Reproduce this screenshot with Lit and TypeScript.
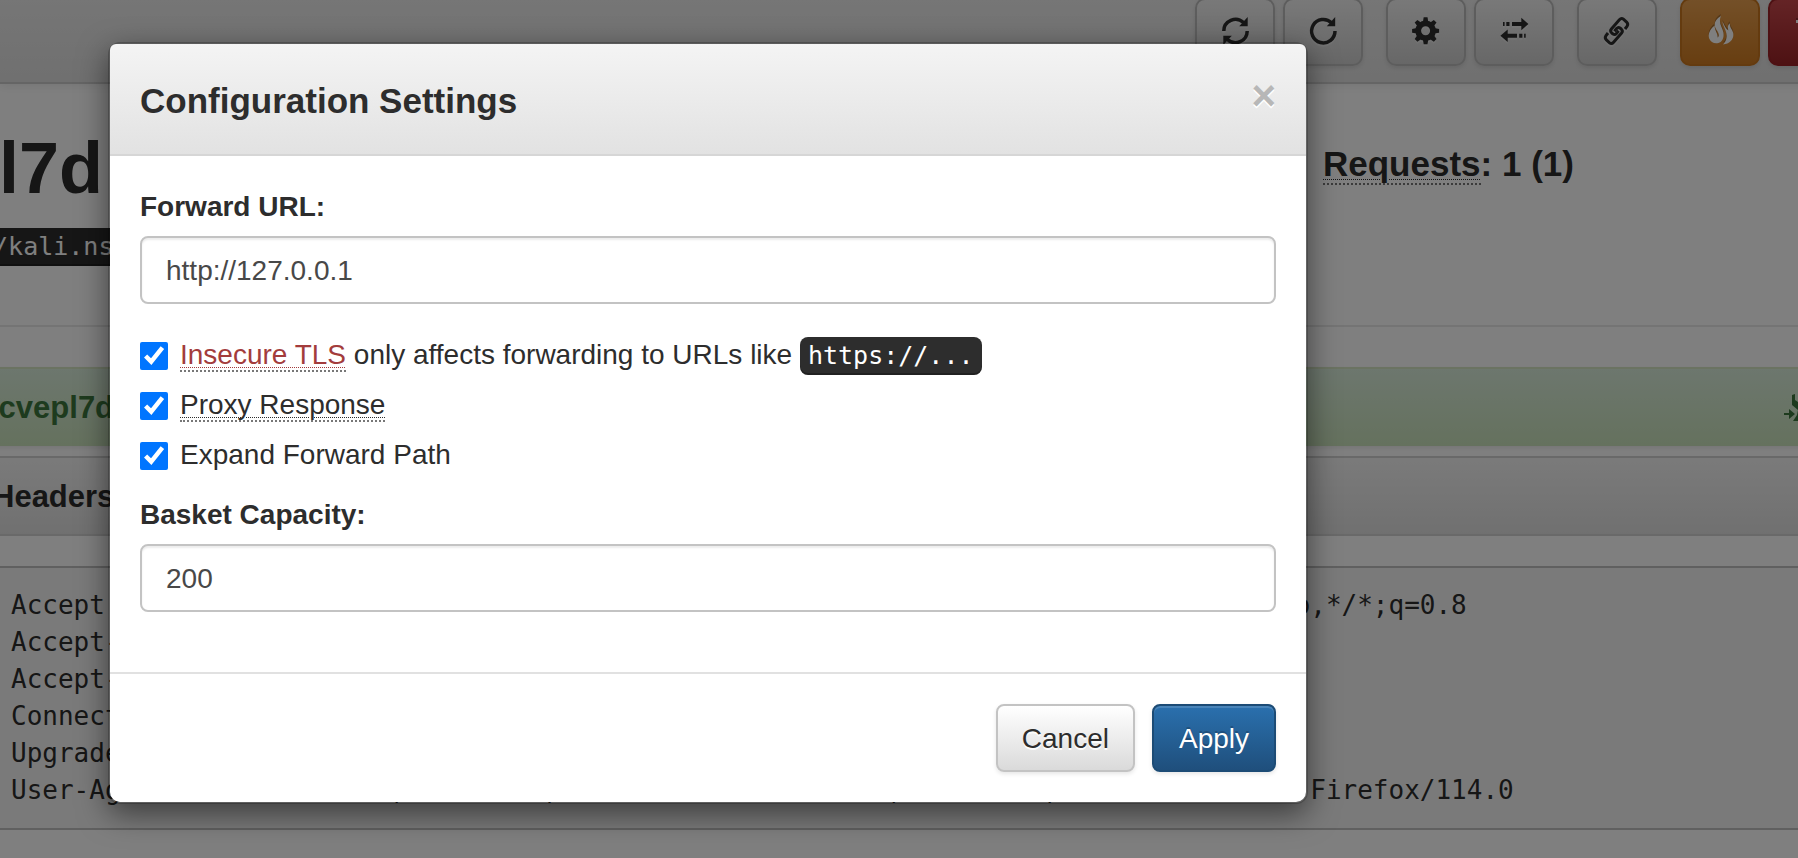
import { LitElement, html, css, svg, nothing } from "lit";
import { customElement, property } from "lit/decorators.js";

const ring = (d: string, width = 3.5) =>
  svg`<path d=${d} fill="none" stroke="currentColor" stroke-width=${width} />`;
const solid = (d: string) => svg`<path d=${d} fill="currentColor" />`;

const icons: Record<string, unknown> = {
  refresh: svg`
    ${ring("M2.8 14A11.7 11.7 0 0 1 22.5 5.5")}
    ${ring("M26.2 14A11.7 11.7 0 0 1 6.5 22.5")}
    ${solid("M26.7 0V9.2H18.2Z M2.3 28V18.8H10.8Z")}`,
  repeat: svg`
    ${ring("M22.5 5.8A11.7 11.7 0 1 0 26 14")}
    ${solid("M26.2 0V9.2H17.8Z")}`,
  cog: svg`
    <circle cx="13.6" cy="13.8" r="7.4" fill="none" stroke="currentColor" stroke-width="5.8" />
    ${[0, 45, 90, 135, 180, 225, 270, 315].map(
      (a) => svg`<path d="M10.9 5L11.7 0.3H15.5L16.3 5Z" fill="currentColor" transform="rotate(${a} 13.6 13.8)" />`
    )}`,
  transfer: solid(
    "M3 5h1.6v4H3z M6.3 5h3.2v4H6.3z M12 5h9.3V0.7L28.4 7 21.3 13.3V9H12z " +
      "M25.7 16.7h-1.6v4h1.6z M22.4 16.7h-3.2v4h3.2z M17 16.7H7.7V12.4L0.4 18.7 7.7 25V20.7H17z"
  ),
  link: svg`
    ${ring("M22 12L24 9.4Q25.6 7 23.6 5L20.4 2.2Q18.4 0.6 16.4 2.8L8.4 12Q6.8 14 8.6 15.8L10 17Q11.8 18.2 13.4 16.4L15.6 13.8", 3)}
    ${ring("M5 16L3 18.6Q1.4 21 3.4 23L6.6 25.8Q8.6 27.4 10.6 25.2L18.6 16Q20.2 14 18.4 12.2L17 11Q15.2 9.8 13.6 11.6L11.4 14.2", 3)}`,
  fire: svg`
    ${solid("M14.9-1C7.4 3.4 7.6 9 11 13.4C13.4 16.6 13.2 19.4 11.6 20.6C12 16.4 8.8 14.6 8.6 8.6C4 12.4 1.6 17 3.2 21.4C4.6 25.2 8.4 27 12.4 26C16.6 24.8 18.2 20 17.4 15.4C16.4 10.4 12 6.4 14.9-1Z")}
    ${solid("M16.6 4.4C16.6 9.4 21.4 14 20.6 20C20.2 23 19.4 25.4 17 27.4C24 26.8 28.2 22 27.2 16C26.6 12.4 23.6 11 23.8 6.2C21.4 8.4 21.6 11.2 22.4 13.6C19.8 11.4 18 8.4 16.6 4.4Z")}`,
  trash: solid("M2 3H9V0H18V3H25V6H2Z M4 8H23V27H4Z"),
  wrench: svg`
    ${solid("M0 19h5v-4L11 20 5 25v-4H0z")}
    ${solid("M8 1L11 0V6L14 8L17 6V0L20 2V9L16 13V27H9L13 21L14 16L8 11Z")}`,
};

@customElement("glyph-icon")
export class GlyphIcon extends LitElement {
  @property() name = "";

  static styles = css`
    :host { display: block; }
    .glyph { display: block; width: 28px; height: 28px; overflow: visible; }
  `;

  render() {
    return html`<svg class="glyph" viewBox="0 0 28 28" aria-hidden="true">${icons[this.name] ?? nothing}</svg>`;
  }
}

const toolbar = [
  [
    { icon: "refresh", label: "Auto refresh", kind: "plain" },
    { icon: "repeat", label: "Refresh", kind: "plain" },
  ],
  [
    { icon: "cog", label: "Settings", kind: "plain" },
    { icon: "transfer", label: "Responses", kind: "plain" },
  ],
  [{ icon: "link", label: "Share", kind: "plain" }],
  [
    { icon: "fire", label: "Delete requests", kind: "warning" },
    { icon: "trash", label: "Destroy basket", kind: "danger" },
  ],
];

const requestHeaders = [
  "Accept: text/html,application/xhtml+xml,application/xml;q=0.9,image/avif,image/webp,*/*;q=0.8",
  "Accept-Encoding: gzip, deflate",
  "Accept-Language: en-US,en;q=0.5",
  "Connection: keep-alive",
  "Upgrade-Insecure-Requests: 1",
  "User-Agent: Mozilla/5.0 (Macintosh; Intel Mac OS X 10.15; rv:109.0) Gecko/20100101 Firefox/114.0",
].join("\n");

const sharedText = css`
  abbr {
    text-decoration: underline dotted 1px;
    text-underline-offset: 3px;
    border-bottom: 2px dotted #777;
  }
  code {
    padding: 4px 8px 5px;
    border-radius: 8px;
    font: 25px "DejaVu Sans Mono", monospace;
    color: #fff;
    background: #2d2d2d;
    box-shadow: inset 0 -2px 0 rgba(0, 0, 0, 0.25);
  }
`;

@customElement("basket-page")
export class BasketPage extends LitElement {
  static styles = [
    sharedText,
    css`
      :host { display: block; }
      .navbar {
        display: flex;
        justify-content: flex-end;
        gap: 23px;
        height: 82px;
        margin-right: -50px;
        border-bottom: 2px solid #cacaca;
        background: linear-gradient(#ececec, #e0e0e0);
        box-shadow: 0 2px 10px rgba(0, 0, 0, 0.08);
      }
      .group { display: flex; gap: 8px; margin-top: -2px; }
      .tool {
        box-sizing: border-box;
        display: flex;
        align-items: center;
        justify-content: center;
        width: 80px;
        height: 68px;
        padding: 0 0 2px;
        border: 2px solid #bbb;
        border-radius: 10px;
        color: #2d2d2d;
        background: linear-gradient(#f2f2f2, #cfcfcf);
        box-shadow: 0 2px 4px rgba(0, 0, 0, 0.1);
      }
      .tool glyph-icon { filter: drop-shadow(0 2px 0 rgba(255, 255, 255, 0.3)); }
      .warning {
        border-color: #c9761f;
        color: #fff;
        background: linear-gradient(#e8a050, #d07c22);
      }
      .danger {
        border-color: #9c2227;
        color: #fff;
        background: linear-gradient(#c9484c, #9c2427);
      }
      .warning glyph-icon, .danger glyph-icon { filter: drop-shadow(0 -2px 0 rgba(0, 0, 0, 0.25)); }

      .content { margin: 0 -42px; }
      .summary {
        display: grid;
        grid-template-columns: minmax(0, 1fr) 517px;
        padding: 45px 0 59px;
        border-bottom: 2px solid #e8e8e8;
      }
      .name { margin: 0; padding-left: 41px; font-size: 72px; line-height: 79px; font-weight: 700; }
      .address { margin: 18px 0 0; padding-left: 12px; line-height: 40px; font-size: 28px; }
      .count { margin: 15px 0 0; font-size: 35px; line-height: 40px; font-weight: 700; }

      .bar {
        display: flex;
        align-items: center;
        justify-content: space-between;
        box-sizing: border-box;
        height: 79px;
        padding: 0 32px;
        margin: 0;
        font-size: 31px;
        font-weight: 700;
      }
      .path {
        margin-top: 40px;
        color: #3c763d;
        border-top: 2px solid #d6e6c4;
        background: linear-gradient(#daeedc, #cae3bc);
        box-shadow: 0 2px 4px rgba(0, 0, 0, 0.08);
      }
      .path glyph-icon { width: 24px; }
      .section {
        height: 80px;
        margin-top: 10px;
        padding-top: 2px;
        border: 2px solid #d2d2d2;
        background: linear-gradient(#f5f5f5, #e1e1e1);
      }
      .section-body { padding: 30px 32px 20px; }
      pre {
        margin: 0;
        padding: 19px;
        border: 2px solid #c0c0c0;
        border-radius: 8px;
        background: #f5f5f5;
        font: 26px/37px "DejaVu Sans Mono", monospace;
      }
    `,
  ];

  render() {
    return html`
      <nav class="navbar">
        ${toolbar.map(
          (group) => html`<div class="group">
            ${group.map(
              (b) => html`<button class="tool ${b.kind}" type="button" aria-label=${b.label}>
                <glyph-icon name=${b.icon}></glyph-icon>
              </button>`
            )}
          </div>`
        )}
      </nav>
      <main class="content">
        <header class="summary">
          <div>
            <h1 class="name">l7d</h1>
            <p class="address"><code>//kali.ns</code></p>
          </div>
          <h4 class="count"><abbr>Requests</abbr>: 1 (1)</h4>
        </header>
        <h4 class="bar path"><span>/cvepl7d</span><glyph-icon name="wrench"></glyph-icon></h4>
        <h4 class="bar section">Headers</h4>
        <div class="section-body"><pre>${requestHeaders}</pre></div>
      </main>
    `;
  }
}

@customElement("config-dialog")
export class ConfigDialog extends LitElement {
  static styles = [
    sharedText,
    css`
      :host { display: block; }
      .dialog {
        border: 2px solid rgba(0, 0, 0, 0.2);
        border-radius: 12px;
        background: #fff;
        background-clip: padding-box;
        box-shadow: 0 10px 30px rgba(0, 0, 0, 0.5);
      }
      .head {
        display: flex;
        justify-content: space-between;
        align-items: flex-start;
        padding: 31px 30px 28px;
        border-bottom: 2px solid #d6d6d6;
        border-radius: 6px 6px 0 0;
        background: linear-gradient(#f4f4f4, #e2e2e2);
      }
      .title { margin: 0; font-size: 35px; line-height: 51px; font-weight: 700; }
      .close {
        margin: 0;
        padding: 0;
        border: 0;
        background: none;
        color: #b7b7b7;
        font: 700 42px/42px "Liberation Sans", Arial, sans-serif;
        text-shadow: 0 2px 0 #fff;
      }
      .body { display: flex; flex-direction: column; padding: 30px; }
      .field { display: flex; flex-direction: column; gap: 8px; margin-bottom: 30px; }
      .caption { font-weight: 700; line-height: 42px; }
      .input {
        box-sizing: border-box;
        width: 100%;
        height: 68px;
        padding: 2px 24px 0;
        border: 2px solid #c3c3c3;
        border-radius: 8px;
        color: #484848;
        background: #fff;
        font: inherit;
        box-shadow: inset 0 2px 2px rgba(0, 0, 0, 0.08);
      }
      .checks { display: flex; flex-direction: column; gap: 10px; margin-bottom: 20px; }
      .check { display: flex; gap: 12px; height: 40px; line-height: 42px; }
      .tick { width: 28px; height: 28px; margin: 8px 0 0; }
      .alert { color: #a33c3c; }
      .foot {
        display: flex;
        justify-content: flex-end;
        gap: 17px;
        padding: 30px;
        border-top: 2px solid #e1e1e1;
      }
      .btn {
        box-sizing: border-box;
        height: 68px;
        padding: 2px 24px 0;
        border: 2px solid #c3c3c3;
        border-radius: 8px;
        color: #2d2d2d;
        background: linear-gradient(#fff, #dadada);
        font: inherit;
        text-shadow: 0 2px 0 rgba(255, 255, 255, 0.9);
        box-shadow: 0 2px 4px rgba(0, 0, 0, 0.1);
      }
      .primary {
        padding: 2px 25px 0;
        border-color: #1c4b75;
        color: #fff;
        background: linear-gradient(#2a70ae, #1f4f7c);
        text-shadow: 0 -2px 0 rgba(0, 0, 0, 0.2);
        box-shadow: inset 0 2px 0 rgba(255, 255, 255, 0.15), 0 2px 4px rgba(0, 0, 0, 0.1);
      }
    `,
  ];

  render() {
    return html`
      <form class="dialog" role="dialog" aria-labelledby="title">
        <header class="head">
          <h4 class="title" id="title">Configuration Settings</h4>
          <button class="close" type="button" aria-label="Close">×</button>
        </header>
        <div class="body">
          <div class="field">
            <label class="caption" for="url">Forward URL:</label>
            <input class="input" id="url" type="text" .value=${"http://127.0.0.1"} />
          </div>
          <div class="checks">
            <label class="check">
              <input class="tick" type="checkbox" checked />
              <span><abbr class="alert">Insecure TLS</abbr> only affects forwarding to URLs like <code>https://...</code></span>
            </label>
            <label class="check">
              <input class="tick" type="checkbox" checked />
              <span><abbr>Proxy Response</abbr></span>
            </label>
            <label class="check">
              <input class="tick" type="checkbox" checked />
              <span>Expand Forward Path</span>
            </label>
          </div>
          <div class="field">
            <label class="caption" for="capacity">Basket Capacity:</label>
            <input class="input" id="capacity" type="text" .value=${"200"} />
          </div>
        </div>
        <footer class="foot">
          <button class="btn" type="button">Cancel</button>
          <button class="btn primary" type="button">Apply</button>
        </footer>
      </form>
    `;
  }
}

@customElement("app-root")
export class AppRoot extends LitElement {
  static styles = css`
    :host {
      display: block;
      position: relative;
      min-height: 100vh;
      overflow: hidden;
      color: #2d2d2d;
      background: #fff;
      font: 28px/40px "Liberation Sans", Arial, sans-serif;
    }
    .backdrop {
      position: absolute;
      inset: 0;
      box-sizing: border-box;
      padding: 42px 490px 0 108px;
      background: rgba(0, 0, 0, 0.5);
    }
  `;

  render() {
    return html`
      <basket-page></basket-page>
      <div class="backdrop"><config-dialog></config-dialog></div>
    `;
  }
}
